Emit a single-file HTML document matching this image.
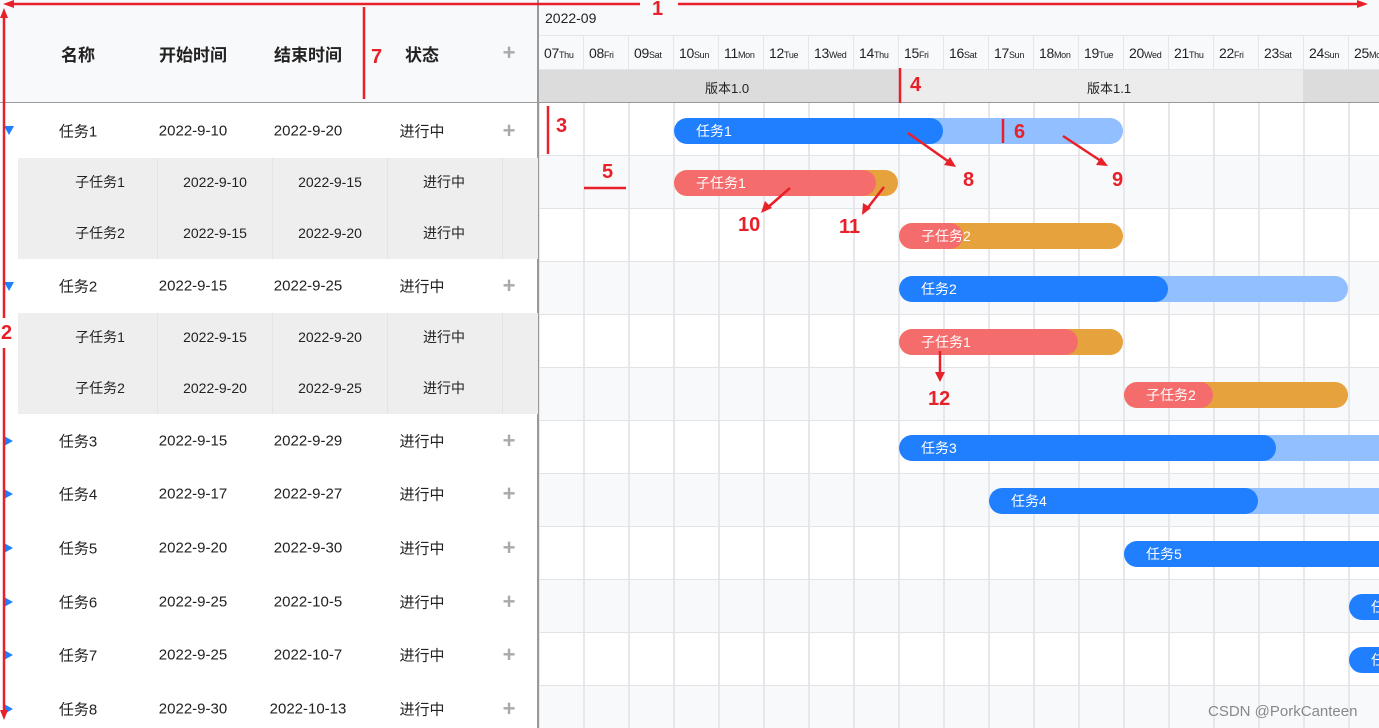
<!DOCTYPE html>
<html><head><meta charset="utf-8"><style>
*{margin:0;padding:0;box-sizing:border-box}
body{width:1379px;height:728px;overflow:hidden;background:#fff;font-family:"Liberation Sans","Noto Sans CJK SC",sans-serif;position:relative;color:#222}
.a{position:absolute}
.hdr{left:0;top:0;width:538px;height:103px;background:#f8f9fb;border-bottom:1px solid #999}
.th{position:absolute;top:41px;font-size:17px;font-weight:bold;transform:translateX(-50%);white-space:nowrap}
.td{position:absolute;font-size:15px;transform:translate(-50%,-50%);white-space:nowrap}
.sd{position:absolute;font-size:14px;transform:translate(-50%,-50%);white-space:nowrap}
.plus{position:absolute;font-size:22px;font-weight:bold;color:#aaa;transform:translate(-50%,-50%)}
.sub{position:absolute;left:18px;width:520px;height:101px;background:#eeeeee;
background-image:repeating-linear-gradient(90deg,transparent 0 114px,#e4e4e4 114px 115px);background-position:25px 0}
.tri{position:absolute;left:4px;width:0;height:0}
.down{border-left:5px solid transparent;border-right:5px solid transparent;border-top:9px solid #1f7fff}
.right{border-top:5px solid transparent;border-bottom:5px solid transparent;border-left:9px solid #1f7fff}
.tl{left:539px;top:0;width:840px;height:728px}
.bar{position:absolute;height:26px;border-radius:13px;overflow:hidden;color:#fff;font-size:14px;line-height:26px}
.bar .p{position:absolute;left:0;top:0;height:26px;border-radius:13px}
.bar span{position:absolute;left:22px;top:0}
.day{position:absolute;top:35px;width:45px;height:35px;border-right:1px solid #e4e6ea;font-size:14px;line-height:36px;padding-left:5px;color:#222;white-space:nowrap;letter-spacing:-0.3px}
.day small{font-size:9px}
.num{position:absolute;color:#e8202a;font-weight:bold;font-size:20px;font-family:"Liberation Sans",sans-serif}
</style></head><body>
<!-- timeline background -->
<div class="a tl" style="background:repeating-linear-gradient(180deg,#fff 0 53px,#f8f9fb 53px 106px);background-position:0 103px"></div>
<div class="a" style="left:539px;top:103px;width:840px;height:625px;background-image:linear-gradient(90deg,#e6e8ec 0 1px,transparent 1px 44px,#e6e8ec 44px 45px);background-size:45px 100%"></div>
<div class="a" style="left:539px;top:103px;width:840px;height:625px;background-image:repeating-linear-gradient(180deg,transparent 0 52px,#e1e3e6 52px 54px);background-size:100% 53px"></div>
<!-- timeline header -->
<div class="a" style="left:539px;top:0;width:840px;height:70px;background:#f8f9fb;border-bottom:1px solid #e4e6ea"></div>
<div class="a" style="left:545px;top:10px;font-size:14px">2022-09</div>
<div class="a" style="left:539px;top:35px;width:840px;height:1px;background:#e4e6ea"></div>
<div class="day" style="left:539px">07<small>Thu</small></div>
<div class="day" style="left:584px">08<small>Fri</small></div>
<div class="day" style="left:629px">09<small>Sat</small></div>
<div class="day" style="left:674px">10<small>Sun</small></div>
<div class="day" style="left:719px">11<small>Mon</small></div>
<div class="day" style="left:764px">12<small>Tue</small></div>
<div class="day" style="left:809px">13<small>Wed</small></div>
<div class="day" style="left:854px">14<small>Thu</small></div>
<div class="day" style="left:899px">15<small>Fri</small></div>
<div class="day" style="left:944px">16<small>Sat</small></div>
<div class="day" style="left:989px">17<small>Sun</small></div>
<div class="day" style="left:1034px">18<small>Mon</small></div>
<div class="day" style="left:1079px">19<small>Tue</small></div>
<div class="day" style="left:1124px">20<small>Wed</small></div>
<div class="day" style="left:1169px">21<small>Thu</small></div>
<div class="day" style="left:1214px">22<small>Fri</small></div>
<div class="day" style="left:1259px">23<small>Sat</small></div>
<div class="day" style="left:1304px">24<small>Sun</small></div>
<div class="day" style="left:1349px">25<small>Mon</small></div>
<div class="a" style="left:539px;top:70px;width:360px;height:33px;background:#dcdcdc;border-bottom:1px solid #999"></div>
<div class="a" style="left:899px;top:70px;width:404px;height:33px;background:#ececec;border-bottom:1px solid #999"></div>
<div class="a" style="left:1303px;top:70px;width:76px;height:33px;background:#dcdcdc;border-bottom:1px solid #999"></div>
<div class="a" style="left:705px;top:78px;font-size:13px">版本1.0</div>
<div class="a" style="left:1087px;top:78px;font-size:13px">版本1.1</div>
<!-- bars -->
<div class="bar" style="left:674px;top:118px;width:449px;background:#91bfff"><div class="p" style="width:269px;background:#1f7fff"></div><span>任务1</span></div>
<div class="bar" style="left:674px;top:170px;width:224px;background:#e6a23c"><div class="p" style="width:202px;background:#f56c6c"></div><span>子任务1</span></div>
<div class="bar" style="left:899px;top:223px;width:224px;background:#e6a23c"><div class="p" style="width:64px;background:#f56c6c"></div><span>子任务2</span></div>
<div class="bar" style="left:899px;top:276px;width:449px;background:#91bfff"><div class="p" style="width:269px;background:#1f7fff"></div><span>任务2</span></div>
<div class="bar" style="left:899px;top:329px;width:224px;background:#e6a23c"><div class="p" style="width:179px;background:#f56c6c"></div><span>子任务1</span></div>
<div class="bar" style="left:1124px;top:382px;width:224px;background:#e6a23c"><div class="p" style="width:89px;background:#f56c6c"></div><span>子任务2</span></div>
<div class="bar" style="left:899px;top:435px;width:520px;background:#91bfff"><div class="p" style="width:377px;background:#1f7fff"></div><span>任务3</span></div>
<div class="bar" style="left:989px;top:488px;width:430px;background:#91bfff"><div class="p" style="width:269px;background:#1f7fff"></div><span>任务4</span></div>
<div class="bar" style="left:1124px;top:541px;width:300px;background:#1f7fff"><span>任务5</span></div>
<div class="bar" style="left:1349px;top:594px;width:60px;background:#1f7fff"><span>任务6</span></div>
<div class="bar" style="left:1349px;top:647px;width:60px;background:#1f7fff"><span>任务7</span></div>
<div class="a" style="left:1208px;top:703px;font-size:15px;color:#888">CSDN @PorkCanteen</div>
<!-- left table -->
<div class="a hdr"></div>
<div class="a" style="left:537px;top:0;width:2px;height:728px;background:#999"></div>
<div class="th" style="left:78px">名称</div>
<div class="th" style="left:193px">开始时间</div>
<div class="th" style="left:308px">结束时间</div>
<div class="th" style="left:422px">状态</div>
<div class="plus" style="left:509px;top:53px">+</div>

<div class="sub" style="top:158px"></div>
<div class="sub" style="top:313px"></div>

<div class="tri down" style="top:126px"></div>
<div class="td" style="left:78px;top:131px">任务1</div><div class="td" style="left:193px;top:131px">2022-9-10</div><div class="td" style="left:308px;top:131px">2022-9-20</div><div class="td" style="left:422px;top:131px">进行中</div><div class="plus" style="left:509px;top:131px">+</div>
<div class="sd" style="left:100px;top:182px">子任务1</div><div class="sd" style="left:215px;top:182px">2022-9-10</div><div class="sd" style="left:330px;top:182px">2022-9-15</div><div class="sd" style="left:444px;top:182px">进行中</div>
<div class="sd" style="left:100px;top:233px">子任务2</div><div class="sd" style="left:215px;top:233px">2022-9-15</div><div class="sd" style="left:330px;top:233px">2022-9-20</div><div class="sd" style="left:444px;top:233px">进行中</div>

<div class="tri down" style="top:282px"></div>
<div class="td" style="left:78px;top:286px">任务2</div><div class="td" style="left:193px;top:286px">2022-9-15</div><div class="td" style="left:308px;top:286px">2022-9-25</div><div class="td" style="left:422px;top:286px">进行中</div><div class="plus" style="left:509px;top:286px">+</div>
<div class="sd" style="left:100px;top:337px">子任务1</div><div class="sd" style="left:215px;top:337px">2022-9-15</div><div class="sd" style="left:330px;top:337px">2022-9-20</div><div class="sd" style="left:444px;top:337px">进行中</div>
<div class="sd" style="left:100px;top:388px">子任务2</div><div class="sd" style="left:215px;top:388px">2022-9-20</div><div class="sd" style="left:330px;top:388px">2022-9-25</div><div class="sd" style="left:444px;top:388px">进行中</div>

<div class="tri right" style="top:436px"></div>
<div class="td" style="left:78px;top:441px">任务3</div><div class="td" style="left:193px;top:441px">2022-9-15</div><div class="td" style="left:308px;top:441px">2022-9-29</div><div class="td" style="left:422px;top:441px">进行中</div><div class="plus" style="left:509px;top:441px">+</div>
<div class="tri right" style="top:489px"></div>
<div class="td" style="left:78px;top:494px">任务4</div><div class="td" style="left:193px;top:494px">2022-9-17</div><div class="td" style="left:308px;top:494px">2022-9-27</div><div class="td" style="left:422px;top:494px">进行中</div><div class="plus" style="left:509px;top:494px">+</div>
<div class="tri right" style="top:543px"></div>
<div class="td" style="left:78px;top:548px">任务5</div><div class="td" style="left:193px;top:548px">2022-9-20</div><div class="td" style="left:308px;top:548px">2022-9-30</div><div class="td" style="left:422px;top:548px">进行中</div><div class="plus" style="left:509px;top:548px">+</div>
<div class="tri right" style="top:597px"></div>
<div class="td" style="left:78px;top:602px">任务6</div><div class="td" style="left:193px;top:602px">2022-9-25</div><div class="td" style="left:308px;top:602px">2022-10-5</div><div class="td" style="left:422px;top:602px">进行中</div><div class="plus" style="left:509px;top:602px">+</div>
<div class="tri right" style="top:650px"></div>
<div class="td" style="left:78px;top:655px">任务7</div><div class="td" style="left:193px;top:655px">2022-9-25</div><div class="td" style="left:308px;top:655px">2022-10-7</div><div class="td" style="left:422px;top:655px">进行中</div><div class="plus" style="left:509px;top:655px">+</div>
<div class="tri right" style="top:704px"></div>
<div class="td" style="left:78px;top:709px">任务8</div><div class="td" style="left:193px;top:709px">2022-9-30</div><div class="td" style="left:308px;top:709px">2022-10-13</div><div class="td" style="left:422px;top:709px">进行中</div><div class="plus" style="left:509px;top:709px">+</div>

<!-- annotations -->
<svg class="a" style="left:0;top:0" width="1379" height="728">
<g stroke="#e8202a" stroke-width="2.5" fill="#e8202a">
<line x1="10" y1="4" x2="640" y2="4"/><line x1="678" y1="4" x2="1362" y2="4"/>
<polygon points="3,4 14,0 14,8" stroke="none"/><polygon points="1368,4 1357,0 1357,8" stroke="none"/>
<line x1="4" y1="14" x2="4" y2="318"/><line x1="4" y1="348" x2="4" y2="712"/>
<polygon points="4,8 0,18 8,18" stroke="none"/><polygon points="4,720 0,710 8,710" stroke="none"/>
<line x1="364" y1="7" x2="364" y2="99"/>
<line x1="548" y1="106" x2="548" y2="154"/>
<line x1="584" y1="188" x2="626" y2="188"/>
<line x1="900" y1="68" x2="900" y2="103"/>
<line x1="1003" y1="119" x2="1003" y2="143"/>
<line x1="908" y1="133" x2="952" y2="164"/><polygon points="956,167 944,165 950,157" stroke="none"/>
<line x1="1063" y1="136" x2="1104" y2="163"/><polygon points="1108,166 1096,165 1101,157" stroke="none"/>
<line x1="790" y1="188" x2="766" y2="209"/><polygon points="761,213 765,201 772,208" stroke="none"/>
<line x1="884" y1="187" x2="866" y2="210"/><polygon points="862,215 863,203 871,208" stroke="none"/>
<line x1="940" y1="351" x2="940" y2="376"/><polygon points="940,382 935,372 945,372" stroke="none"/>
</g></svg>
<div class="num" style="left:652px;top:-2px">1</div>
<div class="num" style="left:1px;top:322px">2</div>
<div class="num" style="left:556px;top:115px">3</div>
<div class="num" style="left:910px;top:74px">4</div>
<div class="num" style="left:602px;top:161px">5</div>
<div class="num" style="left:1014px;top:121px">6</div>
<div class="num" style="left:371px;top:46px">7</div>
<div class="num" style="left:963px;top:169px">8</div>
<div class="num" style="left:1112px;top:169px">9</div>
<div class="num" style="left:738px;top:214px">10</div>
<div class="num" style="left:839px;top:216px">11</div>
<div class="num" style="left:928px;top:388px">12</div>
</body></html>
